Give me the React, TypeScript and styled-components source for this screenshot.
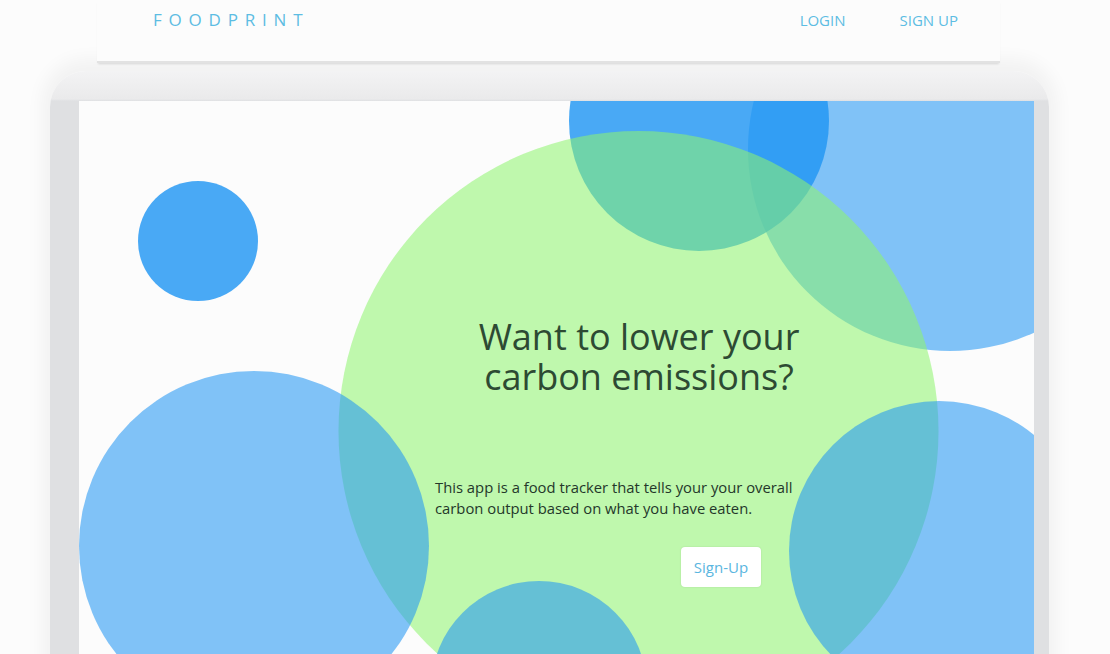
import React from "react";
import styled, { createGlobalStyle } from "styled-components";

const Global = createGlobalStyle`
  html, body { margin: 0; padding: 0; background: #fcfcfc; }
  body { font-family: "Open Sans", "Noto Sans", sans-serif; }
  * { box-sizing: border-box; }
`;

const Header = styled.header`
  margin-left: 97px;
  width: 903px;
  height: 63px;
  padding: 0 42px 22px 56px;
  display: flex;
  align-items: center;
  justify-content: space-between;
  background: #fcfcfc;
  border-bottom: 2px solid #e2e2e2;
  box-shadow: 0 2px 2px -1px rgba(0, 0, 0, 0.12);
  position: relative;
  z-index: 2;
`;

const Logo = styled.div`
  font-size: 17px;
  font-weight: 400;
  letter-spacing: 6.8px;
  color: #5dbde3;
`;

const Nav = styled.nav`
  display: flex;
  gap: 54px;
`;

const NavLink = styled.a`
  font-size: 15px;
  color: #5dbde3;
  text-decoration: none;
  cursor: pointer;
`;

const Frame = styled.div`
  margin: 8px 0 0 50px;
  width: 999px;
  padding: 30px 15px 0 29px;
  border-radius: 36px 36px 0 0;
  background: linear-gradient(to bottom, #f3f3f4 0, #eaeaeb 28px, #dfe0e2 30px);
  box-shadow: 0 -4px 18px 8px rgba(0, 0, 0, 0.045);
`;

const Hero = styled.section`
  position: relative;
  height: 620px;
  overflow: hidden;
  background: #fcfcfc;
`;

const Backdrop = styled.svg`
  position: absolute;
  inset: 0;
  width: 100%;
  height: 100%;
`;

const Content = styled.div`
  position: relative;
  z-index: 1;
  margin-left: 356px;
  width: 408px;
  padding-top: 216px;
  display: flex;
  flex-direction: column;
  align-items: flex-start;
`;

const Title = styled.h1`
  align-self: stretch;
  margin: 0;
  display: flex;
  flex-direction: column;
  align-items: center;
  font-weight: 400;
  font-size: 36px;
  line-height: 40px;
  color: #2d4a33;
`;

const TitleLine = styled.span`
  display: block;
  white-space: nowrap;
`;

const Text = styled.p`
  margin: 80px 0 0;
  width: 380px;
  font-size: 14.8px;
  line-height: 21px;
  color: #24372a;
`;

const Button = styled.button`
  margin: 28px 0 0 246px;
  width: 80px;
  height: 40px;
  border: none;
  border-radius: 4px;
  background: #fff;
  box-shadow: 0 0 2px rgba(0, 0, 0, 0.12);
  font-family: "Open Sans", sans-serif;
  font-size: 15px;
  color: #5ab6e0;
  cursor: pointer;
`;

const DARK = "rgba(33, 150, 243, 0.82)";
const LIGHT = "rgba(33, 150, 243, 0.57)";
const GREEN = "rgba(142, 244, 109, 0.555)";

const circles = [
  { cx: 871, cy: 48, r: 202, fill: LIGHT },
  { cx: 620, cy: 20, r: 130, fill: DARK },
  { cx: 119, cy: 140, r: 60, fill: DARK },
  { cx: 559.5, cy: 330, r: 300, fill: GREEN },
  { cx: 175, cy: 445, r: 175, fill: LIGHT },
  { cx: 460, cy: 588, r: 108, fill: LIGHT },
  { cx: 860, cy: 450, r: 150, fill: LIGHT },
];

export default function App() {
  return (
    <>
      <Global />
      <Header>
        <Logo>FOODPRINT</Logo>
        <Nav>
          <NavLink>LOGIN</NavLink>
          <NavLink>SIGN UP</NavLink>
        </Nav>
      </Header>
      <Frame>
        <Hero>
          <Backdrop viewBox="0 0 955 620" preserveAspectRatio="xMinYMin slice" aria-hidden="true">
            {circles.map((c, i) => (
              <circle key={i} cx={c.cx} cy={c.cy} r={c.r} fill={c.fill} />
            ))}
          </Backdrop>
          <Content>
            <Title>
              <TitleLine>Want to lower your</TitleLine>
              <TitleLine>carbon emissions?</TitleLine>
            </Title>
            <Text>
              This app is a food tracker that tells your your overall carbon output based on what
              you have eaten.
            </Text>
            <Button>Sign-Up</Button>
          </Content>
        </Hero>
      </Frame>
    </>
  );
}
